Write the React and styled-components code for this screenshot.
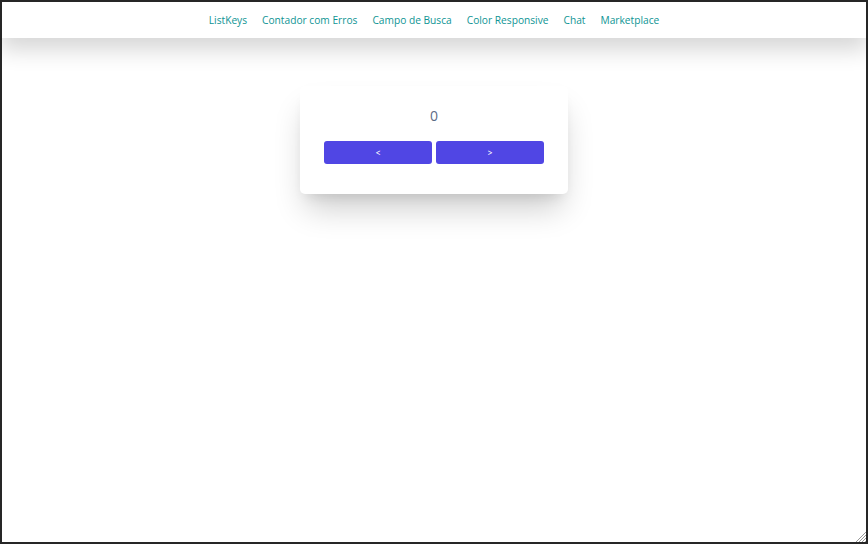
import React, { useState } from 'react';
import styled, { createGlobalStyle } from 'styled-components';

const GlobalStyle = createGlobalStyle`
  html, body {
    margin: 0;
    padding: 0;
    height: 100%;
  }
  body {
    font-family: "Open Sans", "Noto Sans", sans-serif;
    background: #2a2a2a;
  }
  #root {
    height: 100%;
  }
`;

const links = ['ListKeys', 'Contador com Erros', 'Campo de Busca', 'Color Responsive', 'Chat', 'Marketplace'];

const Frame = styled.div`
  box-sizing: border-box;
  height: 544px;
  width: 868px;
  border: 2px solid #262626;
  background: #fff;
  position: relative;
  overflow: hidden;
`;

const Header = styled.nav`
  height: 36px;
  display: flex;
  justify-content: center;
  align-items: center;
  gap: 15px;
  background: #fff;
  box-shadow: 0 10px 22px 2px rgba(0, 0, 0, 0.16);
  position: relative;
  z-index: 1;
`;

const NavLink = styled.a`
  color: #0e9494;
  font-size: 10.2px;
  line-height: 14px;
  text-decoration: none;
  cursor: pointer;
`;

const Main = styled.main`
  display: flex;
  justify-content: center;
  padding-top: 48px;
`;

const Card = styled.div`
  width: 268px;
  box-sizing: border-box;
  padding: 20px 24px 30px;
  background: #fff;
  border-radius: 5px;
  box-shadow: 0 20px 30px -6px rgba(0, 0, 0, 0.2), 0 8px 12px -6px rgba(0, 0, 0, 0.1);
  display: flex;
  flex-direction: column;
  align-items: stretch;
`;

const Count = styled.div`
  text-align: center;
  font-size: 14px;
  line-height: 20px;
  color: #5d6b85;
  margin-bottom: 15px;
`;

const Buttons = styled.div`
  display: grid;
  grid-template-columns: 1fr 1fr;
  gap: 4px;
`;

const Button = styled.button`
  height: 23px;
  border: none;
  border-radius: 3px;
  background: #5046e4;
  color: #fff;
  font-family: inherit;
  font-size: 8px;
  font-weight: 600;
  cursor: pointer;
  padding: 0;
`;

const Grip = styled.svg`
  position: absolute;
  right: 0;
  bottom: 0;
`;

export default function App() {
  const [count, setCount] = useState(0);
  return (
    <>
      <GlobalStyle />
      <Frame>
        <Header>
          {links.map((l) => (
            <NavLink key={l}>{l}</NavLink>
          ))}
        </Header>
        <Main>
          <Card>
            <Count>{count}</Count>
            <Buttons>
              <Button onClick={() => setCount(count - 1)}>&lt;</Button>
              <Button onClick={() => setCount(count + 1)}>&gt;</Button>
            </Buttons>
          </Card>
        </Main>
        <Grip width="12" height="12" viewBox="0 0 12 12">
          <path d="M12 2 L2 12 M12 5 L5 12 M12 8 L8 12 M12 11 L11 12" stroke="#999" strokeWidth="1" />
        </Grip>
      </Frame>
    </>
  );
}
